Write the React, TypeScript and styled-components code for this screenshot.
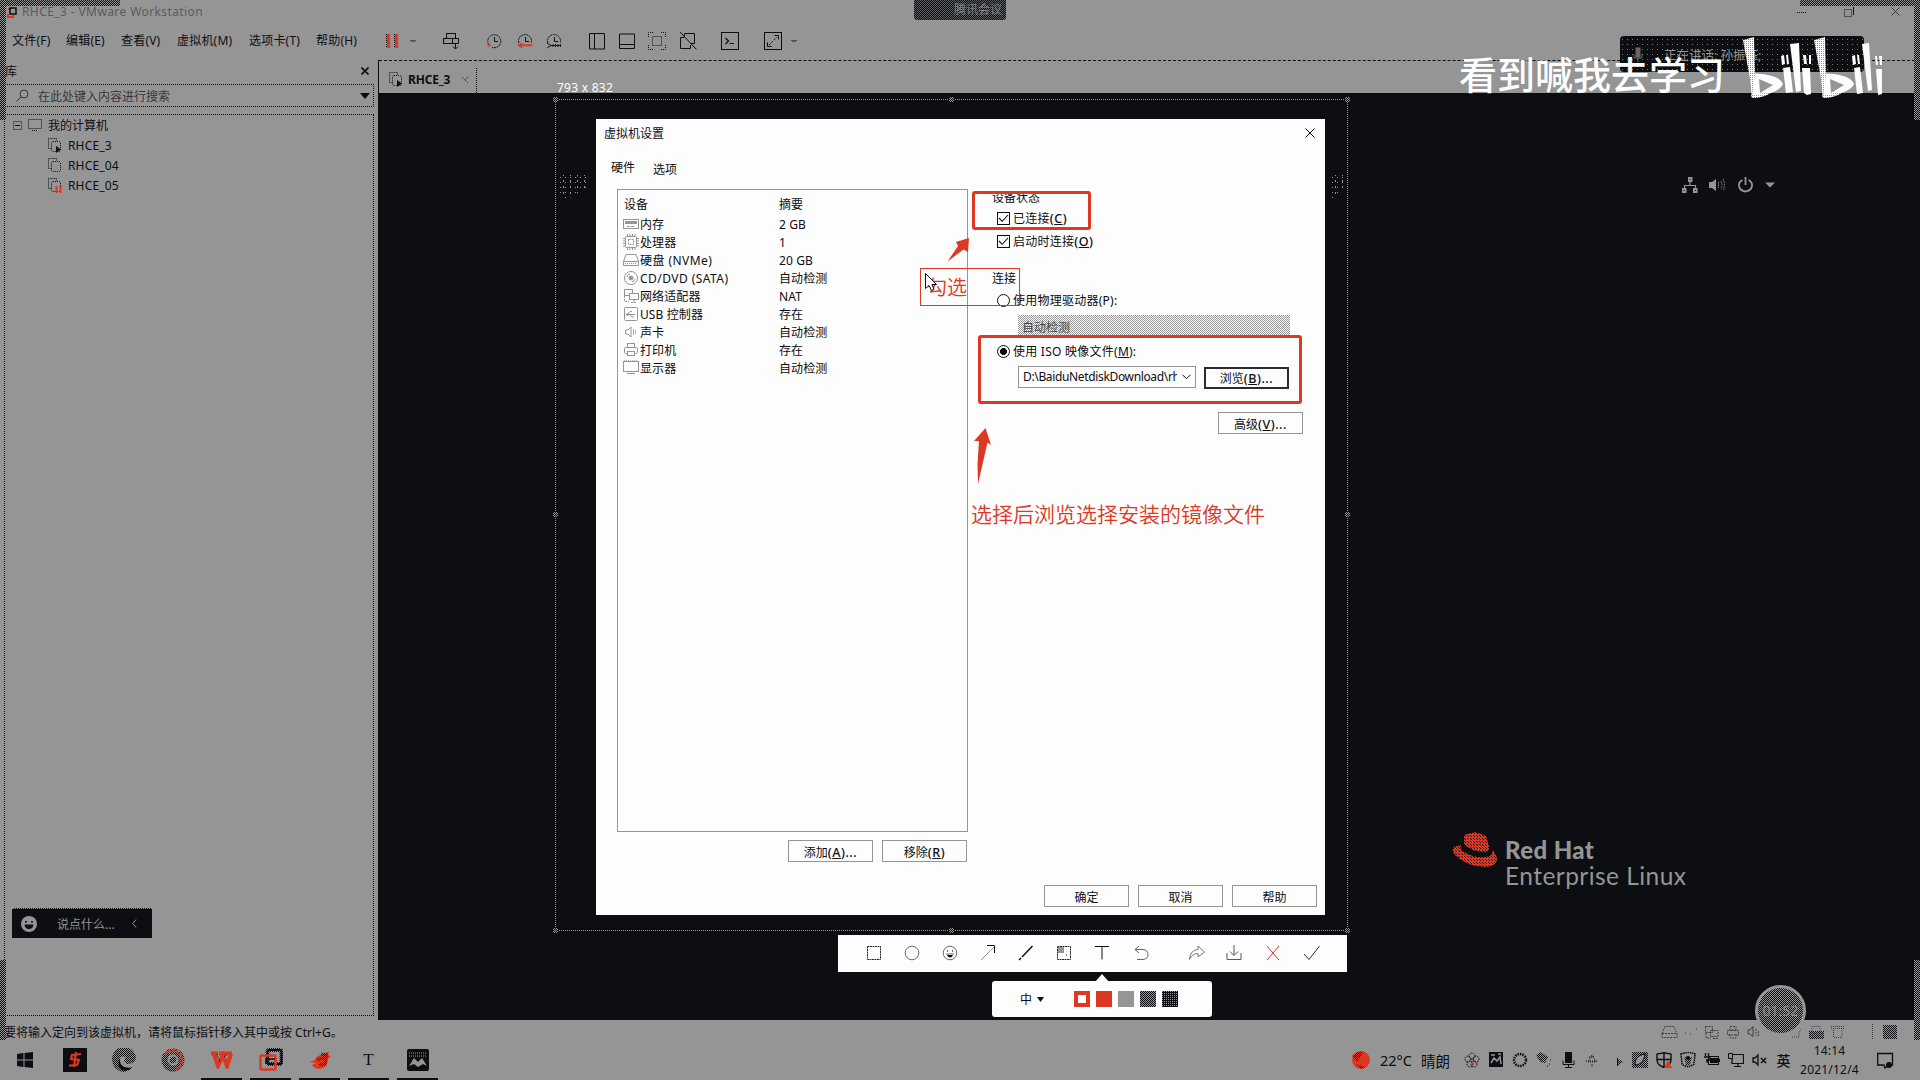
import React from "react";
import styled, { createGlobalStyle, css } from "styled-components";

const INK = "#0c0e12";
const GRAY = "#959595";
const RED = "#dc3824";
const WHITE = "#fdfdfd";

const Global = createGlobalStyle`
  * { box-sizing: border-box; }
  html, body { margin: 0; padding: 0; background: ${INK}; }
  body { font-family: "Noto Sans", "Noto Sans CJK SC", sans-serif; font-size: 12px; color: ${INK}; overflow: hidden; }
`;

const checker = (a: string, b: string) => css`
  background: conic-gradient(${a} 25%, ${b} 0 50%, ${a} 0 75%, ${b} 0) 0 0 / 2px 2px;
`;

const Desktop = styled.div`
  position: relative;
  width: 1920px;
  height: 1080px;
  display: flex;
  flex-direction: column;
  background: ${GRAY};
  overflow: hidden;
  white-space: nowrap;
`;

const TitleBar = styled.header`
  height: 22px;
  display: flex;
  align-items: center;
  justify-content: space-between;
  padding: 1px 20px 0 7px;
  color: #5a5b5d;
`;
const TitleLeft = styled.div`
  display: flex;
  align-items: center;
  gap: 4px;
  font-size: 12px;
  letter-spacing: 0.4px;
`;
const WinControls = styled.div`
  display: flex;
  align-items: center;
  gap: 37px;
`;

const MenuBar = styled.nav`
  height: 38px;
  display: flex;
  align-items: center;
  padding-left: 12px;
`;
const MenuItem = styled.span<{ $w: number }>`
  width: ${(p) => p.$w}px;
  line-height: 18px;
  padding-bottom: 1px;
  letter-spacing: 0.2px;
`;
const Tools = styled.div`
  display: flex;
  align-items: center;
  height: 38px;
`;
const Spaced = styled.span<{ $gap: number }>`
  margin-left: ${(p) => p.$gap}px;
  flex: none;
`;

const Body = styled.main`
  height: 960px;
  display: flex;
`;
const Sidebar = styled.aside`
  width: 378px;
  padding: 0 4px 0 4px;
  display: flex;
  flex-direction: column;
`;
const SideHead = styled.div`
  height: 24px;
  display: flex;
  align-items: center;
  justify-content: space-between;
  padding: 0 5px 2px 1px;
`;
const Search = styled.div`
  height: 23px;
  width: 370px;
  border: 1px dotted ${INK};
  display: flex;
  align-items: center;
  padding: 0 3px 0 11px;
  gap: 9px;
  color: #35373a;
  font-size: 12px;
  & > span { flex: 1; }
`;
const Tree = styled.div`
  margin-top: 7px;
  width: 370px;
  height: 902px;
  border: 1px dotted ${INK};
  padding: 0 0 0 8px;
`;
const TreeRow = styled.div<{ $depth: number }>`
  height: 20px;
  display: flex;
  align-items: center;
  gap: 6px;
  padding-left: ${(p) => p.$depth * 35}px;
  letter-spacing: ${(p) => (p.$depth ? "0.15px" : "0")};
`;

const Stage = styled.section`
  flex: 1;
  background: ${INK};
  border-left: 1px solid ${INK};
`;
const TabStrip = styled.div`
  height: 33px;
  width: 1536px;
  border-top: 1px dashed ${INK};
  background: ${GRAY};
  display: flex;
  align-items: flex-end;
`;
const Tab = styled.div`
  height: 25px;
  width: 98px;
  border-right: 1px dotted ${INK};
  display: flex;
  align-items: center;
  padding: 0 0 2px 10px;
  gap: 5px;
  font-weight: 700;
  font-size: 12px;
  letter-spacing: -0.2px;
`;
const GuestTray = styled.div`
  display: flex;
  align-items: center;
  gap: 11px;
  margin: 82px 0 0 1303px;
  height: 20px;
`;
const Brand = styled.div`
  margin: 637px 0 0 1073px;
  display: flex;
  gap: 7px;
  color: ${GRAY};
`;
const BrandText = styled.div`
  font-family: Lato, "Noto Sans", sans-serif;
  font-size: 24.5px;
  line-height: 26px;
  padding-top: 5px;
  letter-spacing: 0.45px;
`;
const BrandBold = styled.div`
  font-weight: 900;
  font-size: 24px;
  letter-spacing: 0.4px;
`;

const StatusBar = styled.div`
  height: 20px;
  display: flex;
  align-items: center;
  justify-content: space-between;
  padding: 3px 23px 0 4px;
`;
const StatusIcons = styled.div`
  display: flex;
  align-items: center;
  color: #3c3e41;
  height: 20px;
`;
const Slot = styled.span<{ $w: number }>`
  width: ${(p) => p.$w}px;
  display: inline-flex;
  justify-content: center;
  align-items: center;
`;

const Taskbar = styled.footer`
  height: 40px;
  display: flex;
  justify-content: space-between;
`;
const Apps = styled.div`
  display: flex;
  padding-left: 1px;
`;
const AppSlot = styled.div<{ $on?: boolean }>`
  width: 49px;
  height: 40px;
  display: flex;
  align-items: center;
  justify-content: center;
  background: linear-gradient(${(p) => (p.$on ? INK : "transparent")}, ${(p) => (p.$on ? INK : "transparent")}) center bottom / 41px 2px no-repeat;
`;
const SerifT = styled.span`
  font: 17px "Liberation Serif", serif;
`;
const Tray = styled.div`
  width: 569px;
  display: flex;
  align-items: center;
`;
const Weather = styled.div`
  width: 109px;
  display: flex;
  align-items: center;
  gap: 9px;
  font-size: 14.5px;
`;
const Ime = styled.span`
  font-size: 14px;
  font-weight: 500;
`;
const Clock = styled.div`
  width: 69px;
  text-align: center;
  font-size: 12px;
  line-height: 19px;
  letter-spacing: 0.2px;
`;

/* ---------- screen capture overlay ---------- */

const Layer = styled.div<{ $x: number; $y: number; $w?: number; $h?: number }>`
  position: absolute;
  left: ${(p) => p.$x}px;
  top: ${(p) => p.$y}px;
  ${(p) => p.$w !== undefined && `width: ${p.$w}px;`}
  ${(p) => p.$h !== undefined && `height: ${p.$h}px;`}
`;
const EdgeShade = styled(Layer)`
  ${checker(INK, GRAY)}
`;
const Selection = styled(Layer)`
  border: 1px dotted ${GRAY};
`;
const Handle = styled(Layer)`
  ${checker(GRAY, INK)}
`;
const SizeLabel = styled(Layer)`
  color: ${WHITE};
  font-size: 12px;
  line-height: 14px;
  letter-spacing: 0.25px;
`;
const Speckle = styled(Layer)`
  background:
    radial-gradient(circle, ${GRAY} 0.5px, transparent 0.8px) 0 0 / 5px 5px,
    radial-gradient(circle, ${GRAY} 0.5px, transparent 0.8px) 2px 3px / 7px 6px;
  clip-path: polygon(0 0, 100% 0, 100% 45%, 30% 100%, 0 90%);
`;
const RedBox = styled(Layer)<{ $thin?: boolean }>`
  border: ${(p) => (p.$thin ? 1 : 3)}px solid ${RED};
  border-radius: ${(p) => (p.$thin ? 0 : 3)}px;
  pointer-events: none;
`;
const RedNote = styled(Layer)<{ $size: number }>`
  color: ${RED};
  font-family: "Noto Sans CJK SC", sans-serif;
  font-weight: 350;
  font-size: ${(p) => p.$size}px;
  line-height: 28px;
  overflow: hidden;
`;

const Dialog = styled(Layer)`
  background: ${WHITE};
  display: flex;
  flex-direction: column;
`;
const DialogTitle = styled.div`
  height: 30px;
  display: flex;
  align-items: center;
  justify-content: space-between;
  padding: 0 10px 2px 8px;
`;
const DialogTabs = styled.div`
  height: 40px;
  display: flex;
  padding-left: 15px;
  gap: 18px;
  line-height: 18px;
`;
const DialogTab = styled.span<{ $top: number }>`
  padding-top: ${(p) => p.$top}px;
`;
const DialogBody = styled.div`
  display: flex;
  padding-left: 21px;
  height: 673px;
`;
const LeftCol = styled.div`
  width: 351px;
  display: flex;
  flex-direction: column;
`;
const DeviceList = styled.div`
  height: 643px;
  border: 1px solid ${GRAY};
  padding: 5px 0 0 5px;
`;
const DeviceRow = styled.div<{ $head?: boolean }>`
  display: grid;
  grid-template-columns: ${(p) => (p.$head ? "1px 155px 1fr" : "17px 139px 1fr")};
  align-items: center;
  height: ${(p) => (p.$head ? 20 : 18)}px;
  padding-bottom: ${(p) => (p.$head ? 3 : 0)}px;
  letter-spacing: 0.1px;
`;
const Wide = styled.span`
  letter-spacing: 0.45px;
`;
const ButtonRow = styled.div<{ $pad: number; $top: number }>`
  display: flex;
  justify-content: flex-end;
  gap: 9px;
  padding-right: ${(p) => p.$pad}px;
  margin-top: ${(p) => p.$top}px;
`;
const PushButton = styled.button<{ $focus?: boolean; $drop?: number }>`
  width: 85px;
  height: 22px;
  flex: none;
  margin-top: ${(p) => p.$drop || 0}px;
  padding: ${(p) => (p.$focus ? 1 : 3)}px 0 0;
  border: ${(p) => (p.$focus ? `2px solid #2a2c30` : `1px solid ${GRAY}`)};
  background: ${WHITE};
  color: ${INK};
  font: inherit;
  line-height: 16px;
`;
const Key = styled.span`
  font-size: 12.5px;
  font-weight: 500;
  letter-spacing: 0.55px;
`;
const RightCol = styled.div`
  flex: 1;
  display: flex;
  flex-direction: column;
  padding-left: 24px;
`;
const GroupTitle = styled.div<{ $clip?: boolean; $top?: number }>`
  height: 18px;
  line-height: 18px;
  margin-top: ${(p) => p.$top || 0}px;
  ${(p) => p.$clip && "clip-path: inset(5px 0 0 0);"}
`;
const Option = styled.label<{ $h: number; $top?: number }>`
  height: ${(p) => p.$h}px;
  margin-top: ${(p) => p.$top || 0}px;
  padding-left: 5px;
  display: flex;
  align-items: center;
  gap: 3px;
  letter-spacing: 0.25px;
  & > span:last-child { margin-top: -1px; }
`;
const Box = styled.span`
  width: 13px;
  height: 13px;
  border: 1px solid ${INK};
  display: inline-flex;
`;
const Radio = styled.span<{ $on?: boolean }>`
  width: 13px;
  height: 13px;
  border: 1px solid ${INK};
  border-radius: 50%;
  background: ${(p) => (p.$on ? `radial-gradient(circle, ${INK} 3.2px, transparent 3.8px)` : "transparent")};
`;
const SelectDisabled = styled.div`
  margin: 4px 0 0 26px;
  width: 272px;
  height: 20px;
  ${checker(GRAY, WHITE)}
  display: flex;
  align-items: center;
  justify-content: space-between;
  padding: 4px 5px 0 4px;
  color: #44464a;
`;
const PathRow = styled.div`
  margin: 4px 0 0 26px;
  display: flex;
  gap: 8px;
`;
const PathCombo = styled.div`
  width: 178px;
  height: 22px;
  border: 1px solid ${GRAY};
  display: flex;
  align-items: center;
  justify-content: space-between;
  padding: 0 4px;
`;
const PathText = styled.span`
  width: 154px;
  overflow: hidden;
  line-height: 16px;
  letter-spacing: -0.35px;
`;
const AdvancedRow = styled.div`
  margin: 23px 0 0 226px;
`;

const CaptureBar = styled(Layer)`
  background: ${WHITE};
  display: flex;
  align-items: center;
  padding-bottom: 1px;
`;
const StylePopup = styled(Layer)`
  background: ${WHITE};
  border-radius: 3px;
  display: flex;
  align-items: center;
  padding-left: 28px;
`;
const PopupTip = styled(Layer)`
  background: ${WHITE};
  clip-path: polygon(50% 0, 100% 100%, 0 100%);
`;
const FontPick = styled.div`
  width: 54px;
  display: flex;
  align-items: center;
  gap: 5px;
`;
const Swatches = styled.div`
  display: flex;
  gap: 6px;
`;
const Swatch = styled.span<{ $kind: "ring" | "red" | "gray" | "dark" | "darker" }>`
  width: 16px;
  height: 16px;
  ${(p) => p.$kind === "ring" && css`border: 4px solid ${RED};`}
  ${(p) => p.$kind === "red" && css`background: ${RED};`}
  ${(p) => p.$kind === "gray" && css`background: ${GRAY};`}
  ${(p) => p.$kind === "dark" && css`${checker(INK, GRAY)}`}
  ${(p) => p.$kind === "darker" && css`background: conic-gradient(${INK} 75%, ${GRAY} 0) 0 0 / 2px 2px;`}
`;

const ChatPill = styled(Layer)`
  background: ${INK};
  color: ${GRAY};
  display: flex;
  align-items: center;
  padding: 0 15px 0 9px;
  border-top: 1px dotted ${GRAY};
  & > span { flex: 1; padding: 1px 0 0 20px; font-size: 12px; }
`;
const MeetingBadge = styled(Layer)`
  ${checker(INK, "#5b5d60")}
  border-radius: 0 0 3px 3px;
  color: #808184;
  font-size: 12px;
  line-height: 20px;
  padding-left: 40px;
`;
const SpeakerPill = styled(Layer)`
  border-radius: 4px;
  background: radial-gradient(circle, #77797b 0.5px, transparent 0.8px) 0 1px / 5px 5px ${INK};
  color: ${GRAY};
  display: flex;
  align-items: center;
  padding-left: 12px;
  gap: 20px;
  font-size: 12.5px;
`;
const Watermark = styled(Layer)`
  color: ${WHITE};
  font-family: "Noto Sans CJK SC", sans-serif;
  font-weight: 500;
  font-size: 38px;
  line-height: 44px;
`;
const Timer = styled(Layer)`
  border-radius: 50%;
  border: 3px solid ${GRAY};
  ${checker(INK, GRAY)}
  color: #8a8a8b;
  display: flex;
  align-items: center;
  justify-content: center;
  font-size: 14px;
`;

/* ---------- drawings ---------- */

type IconProps = { w?: number; h?: number; sw?: number; c?: string; children?: React.ReactNode };
const Drawing = styled.svg`
  flex: none;
  display: block;
`;
const Icon = ({ w = 16, h = 16, sw = 1, c = "currentColor", children }: IconProps) => (
  <Drawing width={w} height={h} viewBox={`0 0 ${w} ${h}`} fill="none" stroke={c} strokeWidth={sw}>
    {children}
  </Drawing>
);

const Cross = ({ s = 8, sw = 1, c = "currentColor" }) => (
  <Icon w={s} h={s} sw={sw} c={c}><path d={`M.5 .5L${s - 0.5} ${s - 0.5}M${s - 0.5} .5L.5 ${s - 0.5}`} /></Icon>
);
const Caret = ({ w = 9, h = 5 }) => (
  <Icon w={w} h={h}><path d={`M0 0H${w}L${w / 2} ${h}Z`} fill={INK} stroke="none" /></Icon>
);
const SmallV = () => <Icon w={6} h={4}><path d="M.5 1L2 2.5L3 1.5L4 2.5L5.5 1" /></Icon>;
const ChevronDown = ({ c = INK }) => <Icon w={9} h={6} c={c}><path d="M.5 .8L4.5 4.8L8.5 .8" /></Icon>;
const Tick = () => <Icon w={11} h={11} sw={1.1}><path d="M1 5L4.2 8.3L10 2" /></Icon>;

const VmIcon = ({ state }: { state?: "run" | "pause" }) => (
  <Icon w={14} h={15}>
    <path d="M3.5 10.5H.5V.5H8.5V3" strokeDasharray="1 1" />
    <rect x="3.5" y="3.5" width="9" height="10" rx="1.5" strokeDasharray="1 1" />
    {state === "run" && <path d="M8 8L13 11.5L8 15Z" fill={INK} stroke="none" />}
    {state === "pause" && <path d="M8.5 8V15M12.5 8V15" stroke={RED} strokeWidth="2" />}
  </Icon>
);

const ClockGlyph = ({ kind }: { kind: 0 | 1 | 2 }) => (
  <Icon w={16} h={16}>
    <path d={kind === 0 ? "M3 12A6.5 6.5 0 1 1 6 14.3" : "M1.8 10A6.5 6.5 0 1 1 14.2 10"} strokeDasharray="2 .7" />
    <path d="M8.5 4V8.5H12" />
    {kind === 0 && <path d="M1 12H5M3 10V14" stroke={RED} />}
    {kind === 1 && <path d="M1 12.2H15.5M5 10.5L2 12.2L5 14.5" stroke={RED} strokeWidth="2" />}
    {kind === 2 && <path d="M1 10L5 12.5L1 15M7 11V14M9.5 11V14M12 11V14M14.5 11V14M5 12.5H14" strokeWidth=".9" />}
  </Icon>
);

const deviceIcons: Record<string, React.ReactNode> = {
  memory: <><rect x=".5" y="3.5" width="15" height="9" /><path d="M2 6.5H14" strokeWidth="3" /><path d="M4 10.5H12" strokeDasharray="3 1" /></>,
  cpu: <><rect x="2.5" y="2.5" width="11" height="11" rx="1" /><rect x="5.5" y="5.5" width="5" height="5" strokeDasharray="2 1" /><path d="M4.5 0V2M7 0V2M9.5 0V2M12 0V2M4.5 14V16M7 14V16M9.5 14V16M12 14V16M0 4.5H2M0 7H2M0 9.5H2M0 12H2M14 4.5H16M14 7H16M14 9.5H16M14 12H16" /></>,
  disk: <><path d="M.5 9.5L3 2.5H13L15.5 9.5V13.5H.5ZM.5 9.5H15.5" /><path d="M2 11.5H14" strokeDasharray="1 1" /></>,
  cd: <><circle cx="8" cy="8" r="6.5" /><circle cx="8" cy="8" r="2" fill={GRAY} /><path d="M4 7A4 4 0 0 1 7 4M12 9A4 4 0 0 1 9 12" /></>,
  net: <><rect x="1.5" y="1.5" width="8" height="6" /><rect x="6.5" y="5.5" width="9" height="6" fill={WHITE} /><path d="M11 12V14M8 14.5H14M1.5 8V13.5H6" strokeDasharray="2 1" /></>,
  usb: <><rect x="1.5" y="1.5" width="13" height="13" rx="1" /><path d="M3 8.5H12M5 8L7 5.5H9M7 8.5L9 11H11" /><circle cx="4.5" cy="8.5" r="1" fill={GRAY} /></>,
  sound: <><path d="M2.5 6H5L8 3V13L5 10H2.5Z" /><path d="M10.5 5V11M12.5 6.5V10" strokeDasharray="2 .6" /></>,
  printer: <><rect x="4.5" y="1.5" width="7" height="4" /><rect x="1.5" y="5.5" width="13" height="6" rx="1" /><rect x="4.5" y="9.5" width="7" height="4" fill={WHITE} /></>,
  display: <><rect x=".5" y="1.5" width="15" height="10" /><path d="M1 .8H15" strokeDasharray="1 1" /><path d="M4 13.5H12" /></>,
};

const devices: [string, string, string][] = [
  ["memory", "内存", "2 GB"],
  ["cpu", "处理器", "1"],
  ["disk", "硬盘 (NVMe)", "20 GB"],
  ["cd", "CD/DVD (SATA)", "自动检测"],
  ["net", "网络适配器", "NAT"],
  ["usb", "USB 控制器", "存在"],
  ["sound", "声卡", "自动检测"],
  ["printer", "打印机", "存在"],
  ["display", "显示器", "自动检测"],
];

const Defs = styled.svg`
  position: absolute;
  width: 0;
  height: 0;
`;
const Dither = () => (
  <Defs>
    <defs>
      <pattern id="dk" width="2" height="2" patternUnits="userSpaceOnUse"><path d="M0 0h1v1H0zM1 1h1v1H1z" fill={INK} /></pattern>
      <pattern id="rd" width="3" height="3" patternUnits="userSpaceOnUse"><rect width="3" height="3" fill={RED} /><path d="M0 0h1v1H0zM1 1h1v1H1z" fill={INK} /></pattern>
      <pattern id="wh" width="2" height="2" patternUnits="userSpaceOnUse"><rect width="2" height="2" fill={WHITE} /><path d="M0 0h1v1H0z" fill={GRAY} /></pattern>
    </defs>
  </Defs>
);

const toolbar: [number, React.ReactNode][] = [
  [11, <Icon w={16} h={18}><path d="M4.500 2V16M12.500 2V16" stroke={RED} strokeWidth="3.400" /><path d="M2.500 2V16M10.500 2V16" strokeDasharray="1 1" /></Icon>],
  [10, <SmallV />],
  [27, <Icon w={17} h={18}><rect x="3.500" y="1.500" width="9" height="5" /><rect x=".5" y="6.500" width="9" height="5" /><path d="M9.500 6.500H15.500V11.500H9.500M12.500 12V17M10 14.500L12.500 17L15 14.500" /></Icon>],
  [26, <ClockGlyph kind={0} />],
  [15, <ClockGlyph kind={1} />],
  [13, <ClockGlyph kind={2} />],
  [27, <Icon w={17} h={17}><path d="M.5 .5H15.500V16H.5ZM5.500 .5V16" /></Icon>],
  [13, <Icon w={17} h={17}><path d="M.5 1H15.500V15.500H.5ZM.5 11.500H15.500" /></Icon>],
  [12, <Icon w={18} h={18}><path d="M.5 5V.5H5M13 .5H17.500V5M17.500 13V17.500H13M5 17.500H.5V13" strokeDasharray="1 1" /><rect x="4.500" y="4.500" width="9" height="9" strokeDasharray="1 1" /></Icon>],
  [13, <Icon w={18} h={18}><path d="M5.500 5V1.500H15.500V11.500H12M5 5.500H1.500V16.500H11.500V13M1 0L17.500 17.500" /></Icon>],
  [24, <Icon w={18} h={18}><rect x=".5" y=".5" width="17" height="17" /><path d="M4.500 6L7.500 9L4.500 12" strokeWidth="1.300" /><path d="M8.500 11.500H13" /></Icon>],
  [25, <Icon w={18} h={18}><rect x=".5" y=".5" width="17" height="17" /><path d="M10.500 3.500H14.500V7.500M3.500 10.500V14.500H7.500" /><path d="M5 13L13 5" strokeDasharray="2 1.500" /></Icon>],
  [9, <SmallV />],
];

const trayIcons: React.ReactNode[] = [
  <Icon key="a"><g strokeDasharray="1.5 1"><circle cx="8" cy="4" r="3" /><circle cx="4" cy="7" r="3" /><circle cx="12" cy="7" r="3" /><circle cx="6" cy="12" r="3" /><circle cx="10" cy="12" r="3" /></g><path d="M5 8H6M10 8H11M8 10H9M1 9H2M14 9H15" stroke={RED} /></Icon>,
  <Icon key="b"><rect x="1" y="0" width="14" height="15" fill={INK} stroke="none" /><path d="M3 11L6 6L9 9L12 5L13 12M3 3H7M10 2H13" stroke={GRAY} strokeWidth="1.5" /></Icon>,
  <Icon key="c"><circle cx="8" cy="8" r="6" strokeWidth="2.5" strokeDasharray="1.5 1" /></Icon>,
  <Icon key="d"><path d="M0 3L5 0L12 5L9 11L4 10Z" fill="url(#dk)" stroke="none" /><path d="M13 12H14M14 8H15M11 14H12" /></Icon>,
  <Icon key="e"><rect x="5" y="0" width="7" height="11" fill={INK} stroke="none" /><path d="M3 8.5V12.5H14V8.5M8.5 12V15M5 15.5H12" /></Icon>,
  <Icon key="f"><path d="M8 3L4 10H12ZM8 12V15M2 9H14M5 5H11" strokeDasharray="1 1" /></Icon>,
  <Icon key="g"><path d="M9 6L15 10L9 14Z" fill="url(#dk)" stroke="none" /><path d="M9.5 6V14" /></Icon>,
  <Icon key="h"><rect x="0" y="0" width="16" height="16" fill="url(#dk)" stroke="none" /><path d="M3 12C3 6 7 3 13 2C12 8 10 12 4 13Z" fill={GRAY} /></Icon>,
  <Icon key="i"><path d="M8 .7L15 2V8C15 12 12 14 8 15.5C4 14 1 12 1 8V2ZM8 0V15M1 7.5H15" strokeWidth="1.4" /><path d="M12 8L16 16H8Z" fill={RED} stroke="none" /></Icon>,
  <Icon key="j"><path d="M1 2Q8 -1 15 2L14 12Q8 17 2 12Z" strokeWidth="1.6" strokeDasharray="1.5 .7" /><path d="M4 5H12L10 13H6Z" fill="url(#dk)" stroke="none" /><circle cx="8" cy="6" r="2" fill={INK} stroke="none" /></Icon>,
  <Icon key="k"><rect x="4.5" y="4.5" width="10" height="8" /><rect x="6" y="6" width="8" height="5" fill={INK} stroke="none" /><path d="M15.5 7V10M1.500 1V4M4.500 1V4M0 5H6V8H2M3 8V10H5" strokeWidth="1.3" /></Icon>,
  <Icon key="l"><path d="M4 2.5H15.5V11.5H4V6M10 12V14M6 14.5H13" strokeWidth="1.2" /><path d="M.5 1.5H4.5V6.5H.5Z" /></Icon>,
  <Icon key="m"><path d="M1 6H3L6 3V13L3 10H1Z" strokeWidth="1.3" /><path d="M9 6L14 11M14 6L9 11" strokeWidth="1.6" /></Icon>,
];

const Bili = () => (
  <svg width="150" height="66" viewBox="0 0 150 66">
    {[0, 71].map((x) => (
      <g key={x} transform={`translate(${x} 0)`}>
        <path fillRule="evenodd" fill={WHITE} d="M10 38L22 39Q40 41 43 49Q40 58 12 62ZM19 44L20 58L33 50Z" />
        <path fill="url(#wh)" d="M3 5L14 2L15 39L12 62L10 44Z" />
        <path fill="url(#wh)" d="M11 60L32 57Q24 63 12 63Z" />
      </g>
    ))}
    <g fill={WHITE}>
      <path d="M43 33L50 32L53 57L46 58Z" /><path d="M50 9L59 8L61 56L56 57Z" /><path d="M62 33L70 33L71 59L67 60L64 58Z" />
      <path d="M41 21L44 20L45 29L42 30ZM46 20L48 20L49 29L47 29ZM63 20L66 20L67 29L64 29ZM69 20L71 20L71 29L69 29Z" />
      <path d="M114 33L120 32L123 58L117 59Z" /><path d="M122 9L129 8L132 55L128 56Z" /><path d="M136 34L142 34L142 59L138 60Z" />
      <path d="M112 21L115 20L116 29L113 30ZM117 20L119 20L120 29L118 29ZM135 21L137 21L138 30L136 30ZM139 21L142 21L142 30L140 30Z" />
    </g>
  </svg>
);

const captureTools: [number, React.ReactNode][] = [
  [27, <path d="M2.5 2.5H15.5V15.5H2.5Z" stroke="#2a2c30" strokeDasharray="2 .5" />],
  [20, <circle cx="9" cy="9" r="6.8" stroke="#66686a" />],
  [20, <g stroke="#66686a"><circle cx="9" cy="9" r="6.8" /><path d="M6.5 6V8M11.5 6V8M5 10H13" /><path d="M6 11H12Q11 13.500 9 13.500Q7 13.500 6 11Z" fill={INK} stroke="none" /></g>],
  [20, <g><path d="M2 16L16 2" stroke={GRAY} /><path d="M8 1.5H15.5V9" /></g>],
  [20, <path d="M2 16L4 14M5 13L15.500 2" strokeWidth="1.5" />],
  [20, <g><path d="M2.5 2.5H15.5V15.5H2.5Z" stroke="#2a2c30" strokeDasharray="2 .5" /><rect x="3" y="3" width="6" height="6" fill={GRAY} stroke="none" /><path d="M11 11H12" /></g>],
  [20, <path d="M2 2.5H16M9 2.5V15.5" />],
  [22, <path d="M6 2L2 5.5L6 9M2 5.5H10Q15 6 15 10.5Q15 15 10 15.5H4" stroke="#66686a" />],
  [37, <path d="M1.5 15.5Q2 6 10 5.5V2L16.5 8L10 13V9.5Q4 9.5 1.5 15.5Z" stroke="#77787a" />],
  [19, <path d="M9 1V11M5 7.5L9 11.5L13 7.5M2 9V15.5H16V9" stroke="#55575a" />],
  [21, <path d="M3 2L15 16M15 2L3 16" stroke={RED} />],
  [21, <path d="M1 10L6 15.5L16.500 2" stroke="#2a2c30" />],
];

const menus: [string, number][] = [["文件(F)", 54], ["编辑(E)", 55], ["查看(V)", 56], ["虚拟机(M)", 72], ["选项卡(T)", 67], ["帮助(H)", 57]];

export default function App() {
  return (
    <>
      <Global />
      <Desktop>
        <Dither />
        <TitleBar>
          <TitleLeft>
            <Icon w={11} h={12}><path d="M1 8V11H6V9M1 3H4" stroke={RED} strokeWidth="2" /><rect x="3" y="2" width="6" height="6" stroke={INK} strokeWidth="1.5" /></Icon>
            RHCE_3 - VMware Workstation
          </TitleLeft>
          <WinControls>
            <Icon w={10} h={10} c={INK}><path d="M0 5.5H10" strokeDasharray="1 1" /></Icon>
            <Icon w={10} h={10} c={INK}><path d="M.5 2.5H7.5V9.5H.5Z" strokeDasharray="1 1" /><path d="M9.5 0V8" /></Icon>
            <Cross s={9} c="#3c3e41" />
          </WinControls>
        </TitleBar>
        <MenuBar>
          {menus.map(([t, w]) => <MenuItem key={t} $w={w}>{t}</MenuItem>)}
          <Tools>
            {toolbar.map(([gap, icon], i) => <Spaced key={i} $gap={gap}>{icon}</Spaced>)}
          </Tools>
        </MenuBar>
        <Body>
          <Sidebar>
            <SideHead><span>库</span><Cross s={8} sw={1.6} /></SideHead>
            <Search>
              <Icon w={13} h={13}><circle cx="8" cy="5" r="4" /><path d="M5 8L.5 12.5" /></Icon>
              <span>在此处键入内容进行搜索</span>
              <Caret w={10} h={6} />
            </Search>
            <Tree>
              <TreeRow $depth={0}>
                <Icon w={9} h={11}><rect x=".5" y="1.5" width="8" height="8" strokeDasharray="1 1" /><path d="M2 5.5H7" /></Icon>
                <Icon w={14} h={12}><rect x=".5" y=".5" width="13" height="9" strokeDasharray="1 1" /><path d="M4 11.5H10" strokeDasharray="1 1" /></Icon>
                我的计算机
              </TreeRow>
              <TreeRow $depth={1}><VmIcon state="run" />RHCE_3</TreeRow>
              <TreeRow $depth={1}><VmIcon />RHCE_04</TreeRow>
              <TreeRow $depth={1}><VmIcon state="pause" />RHCE_05</TreeRow>
            </Tree>
          </Sidebar>
          <Stage>
            <TabStrip>
              <Tab><VmIcon state="run" />RHCE_3<Icon w={18} h={8}><path d="M7 1L13 7M13 1L10 4" strokeDasharray="1 1.4" /></Icon></Tab>
            </TabStrip>
            <GuestTray>
              <Icon w={16} h={16} c={GRAY}><path d="M8 5V8M2.5 11V8.5H13.5V11" strokeWidth="1.2" /><path d="M6 0h4.500v5H6zM0 11h4.500v5H0zM11 11h4.500v5H11z" fill={GRAY} stroke="none" /><path d="M7.500 2h1v1h-1zM1.500 13h1v1h-1zM13 13h1v1h-1z" fill={INK} stroke="none" /></Icon>
              <Icon w={16} h={14} c={GRAY}><path d="M0 4H3L7 1V13L3 10H0Z" fill={GRAY} stroke="none" /><path d="M9.500 4V10M12 3Q14 7 12 11M14 1Q17 7 14 13" strokeDasharray="1.500 1" /></Icon>
              <Icon w={18} h={16} c={GRAY} sw={1.8}><path d="M6.500 3Q2.500 5 3 9Q4 14 9.500 14.500Q15 14 16 9Q16.500 5 12.500 3M9.500 0V8" /></Icon>
              <Icon w={10} h={6} c={GRAY}><path d="M0 .5H10L5 5.500Z" fill={GRAY} stroke="none" /></Icon>
            </GuestTray>
            <Brand>
              <svg width="46" height="36" viewBox="0 0 46 36">
                <path fill="url(#rd)" d="M12 3L23 0L34 4L37 14Q38 20 31 20Q19 19 12 12ZM9 13Q7 17 12 20Q25 28 38 24Q41 22 40 18Q45 22 45 28Q43 35 33 35Q14 34 3 23Q-1 18 2 15Z" />
              </svg>
              <BrandText>
                <BrandBold>Red Hat</BrandBold>
                <div>Enterprise Linux</div>
              </BrandText>
            </Brand>
          </Stage>
        </Body>
        <StatusBar>
          <span>要将输入定向到该虚拟机，请将鼠标指针移入其中或按 Ctrl+G。</span>
          <StatusIcons>
            <Slot $w={21}><Icon w={17} h={14}><path d="M1 8.500L4 1.500H13L16 8.500V12.500H1ZM1 8.500H16" strokeDasharray="2 1" /></Icon></Slot>
            <Slot $w={21}><Icon w={14} h={8}><path d="M1 5H2M6 6H7M12 1H13" /></Icon></Slot>
            <Slot $w={21}><Icon w={15} h={14}><path d="M1.500 1.500H8.500V7.500H1.500ZM6.500 5.500H14V11.500H6.500ZM2 8V13H7M9 13.500H14" strokeDasharray="2 1" /></Icon></Slot>
            <Slot $w={21}><Icon w={14} h={14}><path d="M4 1.500H10V5H4ZM1.500 5.500H12.500V10H1.500ZM4 9V13H10V9" strokeDasharray="2 1" /></Icon></Slot>
            <Slot $w={21}><Icon w={14} h={13}><path d="M1 5H3L6 1.500V11.500L3 9H1Z" /><path d="M9 4V11M11.500 6V12" strokeDasharray="2 1" /></Icon></Slot>
            <Slot $w={21} />
            <Slot $w={21}><Icon w={12} h={12}><path d="M2 11H9V7L11 3" strokeDasharray="1 1" /></Icon></Slot>
            <Slot $w={21}><Icon w={15} h={14}><path d="M3 6V1.500H11V6" strokeDasharray="1 1" /><path d="M0 6H15V14H0Z" fill="url(#dk)" stroke="none" /></Icon></Slot>
            <Slot $w={21}><Icon w={13} h={13}><path d="M0 1.500H13M0 3.500H13M2.500 5V12.500H11V5" strokeDasharray="1 1" /></Icon></Slot>
            <Slot $w={15} />
            <Slot $w={20}><Icon w={2} h={16}><path d="M.5 0V16" strokeDasharray="1 1" /></Icon></Slot>
            <Slot $w={14}><Icon w={14} h={14}><path d="M0 0H14V14H0Z" fill="url(#dk)" stroke="none" /></Icon></Slot>
          </StatusIcons>
        </StatusBar>
        <Taskbar>
          <Apps>
            <AppSlot><Icon w={18}><path d="M0 2L6.500 1V7.500H0ZM7.500 1L16 0V7.500H7.500ZM0 8.500H6.500V15L0 14ZM7.500 8.500H16V16L7.500 15Z" fill={INK} stroke="none" /></Icon></AppSlot>
            <AppSlot><Icon w={24} h={24}><rect width="24" height="24" fill={INK} stroke="none" /><path d="M18 6L9 7L8 11L16 12L14 17L6 17.500M13 4L11 19" stroke={RED} strokeWidth="2.200" /></Icon></AppSlot>
            <AppSlot><Icon w={24} h={24}><path d="M0 12A12 12 0 0 1 24 10Q23 16 15 16Q10 13 14 9Q7 7 8 14Q11 22 21 19Q16 24 11 24Q1 22 0 12Z" fill="url(#dk)" stroke="none" /><path d="M8 11Q7 20 19 20Q15 24 10 22Q4 17 8 11Z" fill={INK} stroke="none" /></Icon></AppSlot>
            <AppSlot><Icon w={24} h={24}><circle cx="12" cy="12" r="8.500" stroke="url(#dk)" strokeWidth="6" /><path d="M4 6Q8 2 14 2.500Q21 5 21 13Q20 20 15 21" stroke={RED} strokeWidth="2.500" strokeDasharray="3 1" /><circle cx="12" cy="12" r="4" fill="url(#dk)" stroke={GRAY} /></Icon></AppSlot>
            <AppSlot $on><Icon w={24} h={18}><path d="M1 2.500H8M9 2.500H22M4 3L8 15L13 4L17 15L21 3" stroke={RED} strokeWidth="4" /><path d="M7 3L10 11M14 6L17 3" strokeDasharray="1 1" /></Icon></AppSlot>
            <AppSlot $on><Icon w={24} h={24}><rect x="8.500" y="2" width="14" height="14" rx="2" stroke={INK} strokeWidth="2" /><rect x="8.500" y="2" width="14" height="14" rx="2" stroke="url(#dk)" strokeWidth="4" /><rect x="1.500" y="7.500" width="15" height="14" rx="1" stroke={RED} strokeWidth="2.500" /><path d="M7 16V11H16" strokeWidth="1.500" /></Icon></AppSlot>
            <AppSlot $on><Icon w={22} h={20}><path d="M0 12L6 10Q8 5 13 5L20 1L19 5L22 6L19 9Q19 18 10 19Q4 18 3 15L7 13Z" fill={RED} stroke="none" /><path d="M8 10L17 7L16 14L10 15M12 4L19 5" stroke="url(#dk)" strokeWidth="3" /></Icon></AppSlot>
            <AppSlot $on><SerifT>T</SerifT></AppSlot>
            <AppSlot $on><Icon w={22} h={22}><rect width="22" height="22" rx="2" fill={INK} stroke="none" /><path d="M2 4H20M2 7H20" stroke="#55575a" strokeDasharray="1 1" strokeWidth="2" /><path d="M2 17L7 9L11 13L15 9L20 17L16 15L11 18L7 15Z" fill={GRAY} stroke="none" /></Icon></AppSlot>
          </Apps>
          <Tray>
            <Weather>
              <Icon w={20} h={20}><circle cx="10" cy="10" r="9" fill={RED} stroke="none" /><path d="M1 6Q7 1 12 2L6 12ZM5 14L14 17L10 19Z" fill="url(#dk)" stroke="none" /></Icon>
              <span>22°C</span><span>晴朗</span>
            </Weather>
            {trayIcons.map((n, i) => <Slot key={i} $w={24}>{n}</Slot>)}
            <Slot $w={23}><Ime>英</Ime></Slot>
            <Clock><div>14:14</div><div>2021/12/4</div></Clock>
            <Slot $w={42}><Icon w={17} h={17}><path d="M.7 1.500H15.500V13H12L8 16L7 13H.7Z" strokeWidth="1.300" /><circle cx="12" cy="13" r="3" fill={INK} stroke="none" /></Icon></Slot>
          </Tray>
        </Taskbar>

        <EdgeShade $x={0} $y={0} $w={120} $h={6} />
        <EdgeShade $x={0} $y={6} $w={6} $h={114} />
        <EdgeShade $x={1800} $y={0} $w={120} $h={6} />
        <EdgeShade $x={1914} $y={6} $w={6} $h={114} />
        <EdgeShade $x={0} $y={960} $w={6} $h={80} />
        <EdgeShade $x={1914} $y={960} $w={6} $h={80} />

        <Selection $x={555} $y={99} $w={793} $h={832} />
        {[[553, 97], [949, 97], [1345, 97], [553, 512], [1345, 512], [553, 928], [949, 928], [1345, 928]].map(([x, y]) => (
          <Handle key={`${x}-${y}`} $x={x} $y={y} $w={5} $h={5} />
        ))}
        <SizeLabel $x={557} $y={81}>793 x 832</SizeLabel>
        <Speckle $x={558} $y={175} $w={32} $h={24} />
        <Speckle $x={1330} $y={175} $w={15} $h={24} />

        <Dialog $x={596} $y={119} $w={729} $h={796}>
          <DialogTitle><span>虚拟机设置</span><Cross s={10} /></DialogTitle>
          <DialogTabs><DialogTab $top={10}>硬件</DialogTab><DialogTab $top={12}>选项</DialogTab></DialogTabs>
          <DialogBody>
            <LeftCol>
              <DeviceList>
                <DeviceRow $head><span /><span>设备</span><span>摘要</span></DeviceRow>
                {devices.map(([k, a, b]) => (
                  <DeviceRow key={k}><Icon c={GRAY}>{deviceIcons[k]}</Icon>{a.includes("(") ? <Wide>{a}</Wide> : <span>{a}</span>}<span>{b}</span></DeviceRow>
                ))}
              </DeviceList>
              <ButtonRow $pad={1} $top={8}>
                <PushButton>添加<Key>(<u>A</u>)...</Key></PushButton>
                <PushButton>移除<Key>(<u>R</u>)</Key></PushButton>
              </ButtonRow>
            </LeftCol>
            <RightCol>
              <GroupTitle $clip>设备状态</GroupTitle>
              <Option $h={23}><Box><Tick /></Box><span>已连接<Key>(<u>C</u>)</Key></span></Option>
              <Option $h={22}><Box><Tick /></Box><span>启动时连接<Key>(<u>O</u>)</Key></span></Option>
              <GroupTitle $top={18}>连接</GroupTitle>
              <Option $h={22} $top={1}><Radio /><span>使用物理驱动器(P):</span></Option>
              <SelectDisabled><span>自动检测</span><ChevronDown c={GRAY} /></SelectDisabled>
              <Option $h={22} $top={5}><Radio $on /><span>使用 ISO 映像文件(<u>M</u>):</span></Option>
              <PathRow>
                <PathCombo><PathText>D:\BaiduNetdiskDownload\rh</PathText><ChevronDown /></PathCombo>
                <PushButton $focus $drop={1}>浏览<Key>(<u>B</u>)...</Key></PushButton>
              </PathRow>
              <AdvancedRow><PushButton>高级<Key>(<u>V</u>)...</Key></PushButton></AdvancedRow>
            </RightCol>
          </DialogBody>
          <ButtonRow $pad={8} $top={23}>
            <PushButton>确定</PushButton>
            <PushButton>取消</PushButton>
            <PushButton>帮助</PushButton>
          </ButtonRow>
        </Dialog>

        <RedBox $x={972} $y={191} $w={119} $h={39} />
        <RedBox $x={978} $y={335} $w={324} $h={69} />
        <RedBox $thin $x={920} $y={268} $w={100} $h={38} />
        <RedNote $size={20} $x={927} $y={273} $w={40} $h={28}>勾选</RedNote>
        <RedNote $size={21} $x={971} $y={499}>选择后浏览选择安装的镜像文件</RedNote>
        <Layer $x={946} $y={236}>
          <svg width="26" height="28"><path d="M1.500 25.500L12 10L10 6L23 2L22 16L17.500 13.500Z" fill={RED} /></svg>
        </Layer>
        <Layer $x={973} $y={427}>
          <svg width="20" height="58"><path d="M12.500 1L18 18L14.500 15.500L5 57L4.500 37L6 14L1 14Z" fill={RED} /></svg>
        </Layer>
        <Layer $x={924} $y={272}>
          <svg width="14" height="20"><path d="M1.500 1.500V16.500L5 13.500L7.500 18.500L10 17.500L8 12.500H12.500Z" fill={WHITE} stroke={INK} /></svg>
        </Layer>

        <CaptureBar $x={838} $y={935} $w={509} $h={37}>
          {captureTools.map(([gap, shape], i) => <Spaced key={i} $gap={gap}><Icon w={18} h={18}>{shape}</Icon></Spaced>)}
        </CaptureBar>
        <PopupTip $x={1095} $y={974} $w={14} $h={8} />
        <StylePopup $x={992} $y={981} $w={220} $h={36}>
          <FontPick><span>中</span><Caret w={7} h={5} /></FontPick>
          <Swatches>
            <Swatch $kind="ring" /><Swatch $kind="red" /><Swatch $kind="gray" /><Swatch $kind="dark" /><Swatch $kind="darker" />
          </Swatches>
        </StylePopup>

        <ChatPill $x={12} $y={908} $w={140} $h={30}>
          <Icon w={16} h={16}><circle cx="8" cy="8" r="8" fill={GRAY} stroke="none" /><path d="M3.500 8.500H12.500Q12 13 8 13Q4 13 3.500 8.500ZM4 5h2v1.500H4zM10 5h2v1.500h-2z" fill={INK} stroke="none" /></Icon>
          <span>说点什么...</span>
          <Icon w={5} h={9}><path d="M4 .5L.8 4.500L4 8.500" /></Icon>
        </ChatPill>
        <MeetingBadge $x={914} $y={0} $w={92} $h={20}>腾讯会议</MeetingBadge>
        <SpeakerPill $x={1620} $y={36} $w={244} $h={36}>
          <Icon w={12} h={15} c="#66686a"><rect x="4" y="1" width="4" height="9" fill="#66686a" /><path d="M2 7V11H10V7M6 11V15" /></Icon>
          <span>正在讲话: 孙振钰;</span>
        </SpeakerPill>
        <Watermark $x={1459} $y={51}>看到喊我去学习</Watermark>
        <Layer $x={1740} $y={35}><Bili /></Layer>
        <Timer $x={1755} $y={985} $w={51} $h={51}>01:52</Timer>
      </Desktop>
    </>
  );
}
